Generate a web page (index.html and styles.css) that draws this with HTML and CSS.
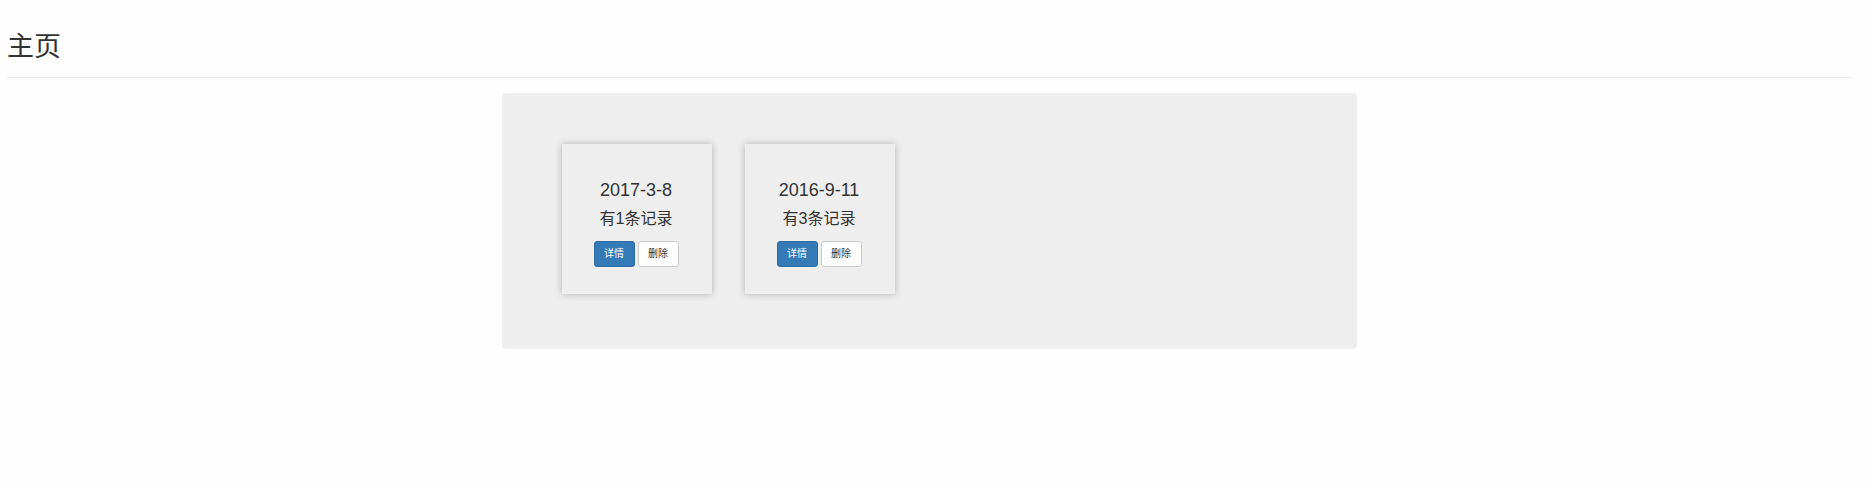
FILE: index.html
```html
<!DOCTYPE html>
<html lang="zh-CN">
<head>
<meta charset="utf-8">
<title>主页</title>
<link rel="stylesheet" href="styles.css">
</head>
<body>
<header class="page-header"><h1 class="page-title">主页</h1></header>
<main class="panel">
  <article class="card">
    <h2 class="card-date">2017-3-8</h2>
    <p class="card-count">有1条记录</p>
    <div class="card-actions">
      <button type="button" class="btn btn-primary">详情</button>
      <button type="button" class="btn">删除</button>
    </div>
  </article>
  <article class="card">
    <h2 class="card-date">2016-9-11</h2>
    <p class="card-count">有3条记录</p>
    <div class="card-actions">
      <button type="button" class="btn btn-primary">详情</button>
      <button type="button" class="btn">删除</button>
    </div>
  </article>
</main>
</body>
</html>
```
FILE: styles.css
```css
* {
  box-sizing: border-box;
}

body {
  margin: 0;
  padding: 0 22px 0 7px;
  background: #fefefe;
  color: #333;
  font-family: "Liberation Sans", "Noto Sans CJK SC", sans-serif;
}

.page-header {
  padding: 31px 0 14px;
  border-bottom: 1px solid #ebebeb;
}

.page-title {
  margin: 0;
  font-size: 27px;
  font-weight: 400;
  line-height: 32px;
}

.panel {
  display: flex;
  flex-wrap: wrap;
  gap: 33px;
  max-width: 855px;
  margin: 15px auto;
  padding: 51px 60px 55px;
  border-radius: 4px;
  background: #eee;
}

.card {
  width: 150px;
  padding: 36px 2px 27px 0;
  text-align: center;
  box-shadow: 0 0 7px #b0b0b0;
}

.card-date,
.card-count {
  margin: 0;
  font-weight: 400;
}

.card-date {
  font-size: 18px;
  line-height: 20px;
}

.card-count {
  margin-top: 8px;
  font-size: 16px;
  line-height: 22px;
}

.card-actions {
  display: flex;
  justify-content: center;
  gap: 3px;
  margin-top: 11px;
}

.btn {
  width: 41px;
  height: 26px;
  padding: 0;
  border: 1px solid #ccc;
  border-radius: 3px;
  background: #fff;
  color: #333;
  font-family: inherit;
  font-size: 10px;
  line-height: 18px;
  cursor: pointer;
}

.btn-primary {
  border-color: #2e6da4;
  background: #337ab7;
  color: #fff;
}
```
